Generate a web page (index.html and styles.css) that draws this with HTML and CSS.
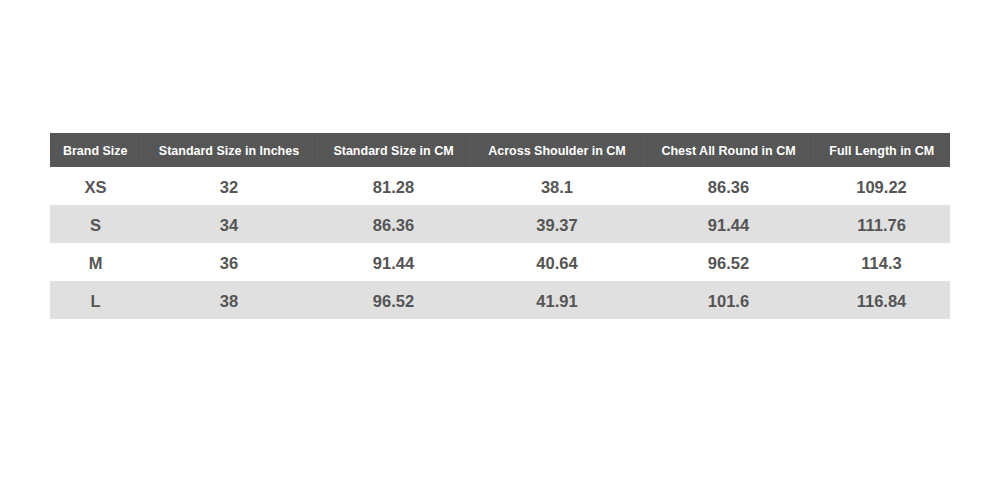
FILE: index.html
```html
<!DOCTYPE html>
<html lang="en">
<head>
    <meta charset="UTF-8">
    <meta name="viewport" content="width=device-width, initial-scale=1.0">
    <title>Size Chart</title>
    <link rel="stylesheet" href="styles.css">
</head>
<body>
    <div class="chart-container">
        <table class="size-chart">
            <colgroup>
                <col class="col-brand">
                <col class="col-inches">
                <col class="col-cm">
                <col class="col-shoulder">
                <col class="col-chest">
                <col class="col-length">
            </colgroup>
            <thead>
                <tr>
                    <th>Brand Size</th>
                    <th>Standard Size in Inches</th>
                    <th>Standard Size in CM</th>
                    <th>Across Shoulder in CM</th>
                    <th>Chest All Round in CM</th>
                    <th>Full Length in CM</th>
                </tr>
            </thead>
            <tbody>
                <tr>
                    <td>XS</td>
                    <td>32</td>
                    <td>81.28</td>
                    <td>38.1</td>
                    <td>86.36</td>
                    <td>109.22</td>
                </tr>
                <tr>
                    <td>S</td>
                    <td>34</td>
                    <td>86.36</td>
                    <td>39.37</td>
                    <td>91.44</td>
                    <td>111.76</td>
                </tr>
                <tr>
                    <td>M</td>
                    <td>36</td>
                    <td>91.44</td>
                    <td>40.64</td>
                    <td>96.52</td>
                    <td>114.3</td>
                </tr>
                <tr>
                    <td>L</td>
                    <td>38</td>
                    <td>96.52</td>
                    <td>41.91</td>
                    <td>101.6</td>
                    <td>116.84</td>
                </tr>
            </tbody>
        </table>
    </div>
</body>
</html>
```
FILE: styles.css
```css
body {
    font-family: Arial, "Liberation Sans", sans-serif;
    background-color: #ffffff;
    margin: 0;
}

.chart-container {
    padding: 133px 50px 0;
}

.size-chart {
    width: 900px;
    border-collapse: collapse;
    table-layout: fixed;
}

.col-brand { width: 91px; }
.col-inches { width: 176px; }
.col-cm { width: 153px; }
.col-shoulder { width: 174px; }
.col-chest { width: 169px; }
.col-length { width: 137px; }

.size-chart th {
    height: 34px;
    padding: 2px 0 0;
    box-sizing: border-box;
    background-color: #565656;
    color: #ffffff;
    font-size: 12.5px;
    font-weight: bold;
    text-align: center;
    border-left: 1px solid #5c5c5c;
}

.size-chart th:first-child {
    border-left: none;
}

.size-chart td {
    height: 38px;
    padding: 2px 0 0;
    box-sizing: border-box;
    color: #555555;
    font-size: 16.5px;
    font-weight: bold;
    text-align: center;
}

.size-chart tbody tr:nth-child(even) td {
    background-color: #e0e0e0;
}
```
